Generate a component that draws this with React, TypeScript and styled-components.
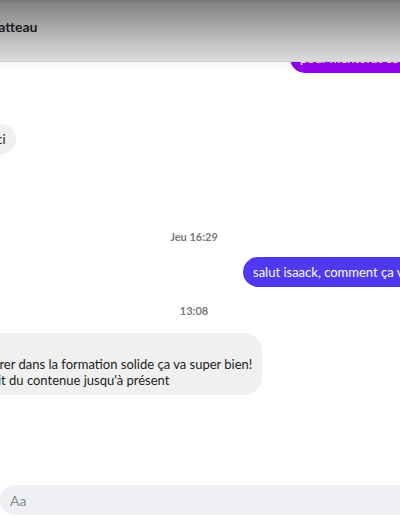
import { FC } from "react";
import styled, { createGlobalStyle } from "styled-components";

const GlobalStyle = createGlobalStyle`
  html, body {
    margin: 0;
    padding: 0;
    background: #ffffff;
  }
  * {
    box-sizing: border-box;
  }
`;

interface BubbleProps {
  $offset: number;
}

const App: FC = () => {
  return (
    <>
      <GlobalStyle />
      <StyledChat>
        <Header>
          <Title>Chatteau</Title>
        </Header>
        <Thread>
          <OutBubble $offset={290} $tone="#9603ef">
            pour mentorat ce soir ?
          </OutBubble>
          <InBubble $offset={-39} $gap={51}>
            Merci
          </InBubble>
          <Stamp $gap={75}>Jeu 16:29</Stamp>
          <OutBubble $offset={243} $tone="#5037f0" $gap={12}>
            salut isaack, comment ça va ?
          </OutBubble>
          <Stamp $gap={16}>13:08</Stamp>
          <InBubble $offset={-89} $gap={14}>
            Salut !
            <br />
            Je viens d'entrer dans la formation solide ça va super bien!
            <br />
            Super bien fait du contenue jusqu'à présent
          </InBubble>
        </Thread>
        <Composer>
          <Input placeholder="Aa" />
        </Composer>
      </StyledChat>
    </>
  );
};

export default App;

const StyledChat = styled.div`
  position: relative;
  width: 400px;
  height: 516px;
  overflow: hidden;
  display: flex;
  flex-direction: column;
  background: #ffffff;
  font-family: Lato, "Open Sans", sans-serif;
`;

const Header = styled.div`
  position: absolute;
  top: 0;
  left: 0;
  right: 0;
  height: 62px;
  z-index: 2;
  display: flex;
  align-items: center;
  padding-bottom: 8px;
  background: linear-gradient(
    to bottom,
    #767676 0px,
    #858585 4px,
    #a3a3a3 24px,
    #c4c4c4 44px,
    #dcdcdc 61px
  );
  border-bottom: 1px solid #cfcfcf;
  box-shadow: 0 4px 10px rgba(0, 0, 0, 0.05);
`;

const Title = styled.div`
  margin-left: -19px;
  font-size: 14px;
  font-weight: 700;
  color: #1a1a1a;
  white-space: nowrap;
`;

const Thread = styled.div`
  flex: 1;
  display: flex;
  flex-direction: column;
  align-items: flex-start;
  padding-top: 43px;
`;

const Bubble = styled.div<BubbleProps & { $gap?: number }>`
  margin-left: ${({ $offset }) => $offset}px;
  margin-top: ${({ $gap }) => $gap || 0}px;
  padding: 7px 12px;
  border-radius: 18px;
  font-size: 13px;
  line-height: 16px;
  white-space: nowrap;
`;

const OutBubble = styled(Bubble)<{ $tone: string }>`
  padding-left: 10px;
  background-color: ${({ $tone }) => $tone};
  color: #ffffff;
`;

const InBubble = styled(Bubble)`
  padding-right: 10px;
  background-color: #f0f0f0;
  color: #1c1c1c;
`;

const Stamp = styled.div<{ $gap: number }>`
  align-self: center;
  margin-top: ${({ $gap }) => $gap}px;
  margin-right: 12px;
  font-size: 11px;
  line-height: 16px;
  font-weight: 700;
  color: #7a7a7a;
`;

const Composer = styled.div`
  display: flex;
  padding: 0 0 1px 0;
`;

const Input = styled.input`
  flex: 1;
  margin-right: -40px;
  height: 30px;
  border: none;
  outline: none;
  border-radius: 16px;
  padding: 0 10px;
  background-color: #eef0f3;
  font-family: Lato, "Open Sans", sans-serif;
  font-size: 14px;
  color: #1c1c1c;

  &::placeholder {
    color: #8a8a8a;
  }
`;
